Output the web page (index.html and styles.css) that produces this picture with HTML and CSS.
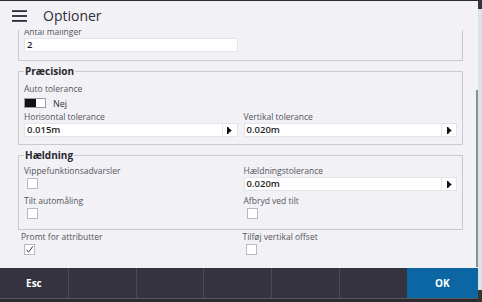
FILE: index.html
```html
<!DOCTYPE html>
<html lang="da">
<head>
<meta charset="utf-8">
<title>Optioner</title>
<link rel="stylesheet" href="styles.css">
</head>
<body>
<div class="desktop">
  <div class="window">
    <header class="appbar">
      <svg class="menu-icon" width="15" height="12" viewBox="0 0 15 12" aria-hidden="true">
        <rect x="0" y="0.2" width="15" height="1.8" fill="#2c2c38"/>
        <rect x="0" y="5.1" width="15" height="1.8" fill="#2c2c38"/>
        <rect x="0" y="10" width="15" height="1.8" fill="#2c2c38"/>
      </svg>
      <h1 class="title">Optioner</h1>
    </header>

    <main class="viewport">
      <fieldset class="group group-first">
        <div class="grid2">
          <div class="field">
            <span class="field-label">Antal målinger</span>
            <div class="input"><span class="value">2</span></div>
          </div>
        </div>
      </fieldset>

      <fieldset class="group group-precision">
        <legend class="group-title">Præcision</legend>
        <div class="field">
          <span class="field-label">Auto tolerance</span>
          <div class="toggle-row">
            <span class="toggle"><span class="toggle-knob"></span></span>
            <span class="toggle-text">Nej</span>
          </div>
        </div>
        <div class="grid2">
          <div class="field">
            <span class="field-label">Horisontal tolerance</span>
            <div class="input">
              <span class="value">0.015m</span>
              <span class="input-btn"><svg width="5" height="7" viewBox="0 0 5 7" aria-hidden="true"><path d="M0.5 0 L4.8 3.5 L0.5 7 Z" fill="#111"/><rect x="0" y="0" width="1.4" height="7" fill="#111"/></svg></span>
            </div>
          </div>
          <div class="field">
            <span class="field-label">Vertikal tolerance</span>
            <div class="input">
              <span class="value">0.020m</span>
              <span class="input-btn"><svg width="5" height="7" viewBox="0 0 5 7" aria-hidden="true"><path d="M0.5 0 L4.8 3.5 L0.5 7 Z" fill="#111"/><rect x="0" y="0" width="1.4" height="7" fill="#111"/></svg></span>
            </div>
          </div>
        </div>
      </fieldset>

      <fieldset class="group group-tilt">
        <legend class="group-title">Hældning</legend>
        <div class="grid2">
          <div class="field">
            <span class="field-label">Vippefunktionsadvarsler</span>
            <span class="check"></span>
          </div>
          <div class="field">
            <span class="field-label">Hældningstolerance</span>
            <div class="input">
              <span class="value">0.020m</span>
              <span class="input-btn"><svg width="5" height="7" viewBox="0 0 5 7" aria-hidden="true"><path d="M0.5 0 L4.8 3.5 L0.5 7 Z" fill="#111"/><rect x="0" y="0" width="1.4" height="7" fill="#111"/></svg></span>
            </div>
          </div>
          <div class="field">
            <span class="field-label">Tilt automåling</span>
            <span class="check"></span>
          </div>
          <div class="field">
            <span class="field-label">Afbryd ved tilt</span>
            <span class="check"></span>
          </div>
        </div>
      </fieldset>

      <div class="grid2 outer-grid">
        <div class="field">
          <span class="field-label">Promt for attributter</span>
          <span class="check check-on"><svg width="9" height="9" viewBox="0 0 9 9" aria-hidden="true"><polyline points="1.6,4.8 3.6,7.2 7.8,1.4" fill="none" stroke="#3a3a40" stroke-width="1"/></svg></span>
        </div>
        <div class="field">
          <span class="field-label">Tilføj vertikal offset</span>
          <span class="check"></span>
        </div>
      </div>

      <div class="scroll-thumb"></div>
    </main>

    <footer class="softkeys">
      <button class="softkey">Esc</button>
      <button class="softkey"></button>
      <button class="softkey"></button>
      <button class="softkey"></button>
      <button class="softkey"></button>
      <button class="softkey"></button>
      <button class="softkey softkey-primary">OK</button>
    </footer>
  </div>
  <div class="desk-edge"></div>
</div>
</body>
</html>
```

FILE: styles.css
```css
* { box-sizing: border-box; }

html, body {
  margin: 0;
  padding: 0;
}

body {
  width: 482px;
  height: 302px;
  overflow: hidden;
  background: #2a2a2f;
  font-family: "Open Sans", "Noto Sans", sans-serif;
}

.desktop {
  display: flex;
  height: 302px;
}

.window {
  width: 478px;
  height: 298px;
  margin-top: 1px;
  background: #f2f1f6;
  display: flex;
  flex-direction: column;
}

.desk-edge {
  width: 4px;
  background: linear-gradient(to bottom, #35353b 0 9px, #d7e4e8 9px 290px, #3a3431 290px);
}

/* header */
.appbar {
  height: 29px;
  flex: none;
  display: flex;
  align-items: center;
  padding-left: 12px;
}

.menu-icon {
  display: block;
}

.title {
  margin: 0 0 0 16px;
  font-size: 14px;
  font-weight: 400;
  line-height: 1;
  color: #2e2e36;
}

/* scroll area */
.viewport {
  flex: 1;
  position: relative;
  overflow: hidden;
  padding: 0 15px 0 18px;
}

.scroll-thumb {
  position: absolute;
  right: 0;
  top: 60px;
  width: 2px;
  height: 177px;
  background: #8e8e95;
}

/* groups */
.group {
  margin: 3px 0 0;
  min-width: 0;
  border: 1px solid #cbcad0;
  padding: 3px 5px 10px;
}

.group-first {
  margin-top: -13px;
  padding: 8px 5px 8px;
}

.group-precision {
  padding-top: 5px;
  padding-bottom: 7px;
}

.group-title {
  padding: 0 1px;
  font-size: 10px;
  line-height: 14px;
  font-weight: 700;
  color: #26262c;
}

.grid2 {
  display: grid;
  grid-template-columns: 1fr 1fr;
  column-gap: 6px;
  row-gap: 4px;
}

.outer-grid {
  margin-top: 1px;
  padding: 0 5px 0 3px;
}

.field {
  display: flex;
  flex-direction: column;
  align-items: flex-start;
  min-width: 0;
}

.field-label {
  font-size: 8.5px;
  line-height: 12px;
  color: #55555c;
  white-space: nowrap;
}

.input {
  align-self: stretch;
  height: 14px;
  background: #fff;
  border: 1px solid #e4e4e9;
  display: flex;
  align-items: center;
}

.value {
  flex: 1;
  padding-left: 2px;
  font-size: 9.5px;
  line-height: 12px;
  font-weight: 600;
  color: #1f1f24;
}

.input-btn {
  width: 15px;
  align-self: stretch;
  border-left: 1px solid #e6e6ea;
  display: flex;
  align-items: center;
  justify-content: center;
}

.input-btn svg {
  display: block;
}

/* checkbox */
.check {
  width: 11px;
  height: 11px;
  margin: 1px 0 0 3px;
  background: #fff;
  border: 1px solid #b9b9c0;
  display: flex;
  align-items: center;
  justify-content: center;
}

.check svg {
  display: block;
}

/* toggle */
.toggle-row {
  display: flex;
  align-items: center;
  height: 14px;
  margin: 1px 0;
  gap: 7px;
}

.toggle {
  width: 22px;
  height: 10px;
  border: 1px solid #9a9aa0;
  background: #fff;
  display: flex;
}

.toggle-knob {
  width: 11px;
  background: #111;
}

.toggle-text {
  font-size: 9px;
  color: #333;
}

/* softkeys */
.softkeys {
  height: 31px;
  flex: none;
  display: grid;
  grid-template-columns: repeat(6, 67.8px) 1fr;
  background: #34333f;
  border-bottom: 1px solid #5a5a63;
}

.softkey {
  margin: 0;
  padding: 0;
  border: none;
  border-left: 1px solid #4a4957;
  background: transparent;
  color: #fff;
  font-family: "Open Sans", "Noto Sans", sans-serif;
  font-size: 10px;
  font-weight: 700;
  display: flex;
  align-items: center;
  justify-content: center;
}

.softkey:first-child {
  border-left: none;
}

.softkey-primary {
  background: #0b66a3;
  border-left: none;
}
```
